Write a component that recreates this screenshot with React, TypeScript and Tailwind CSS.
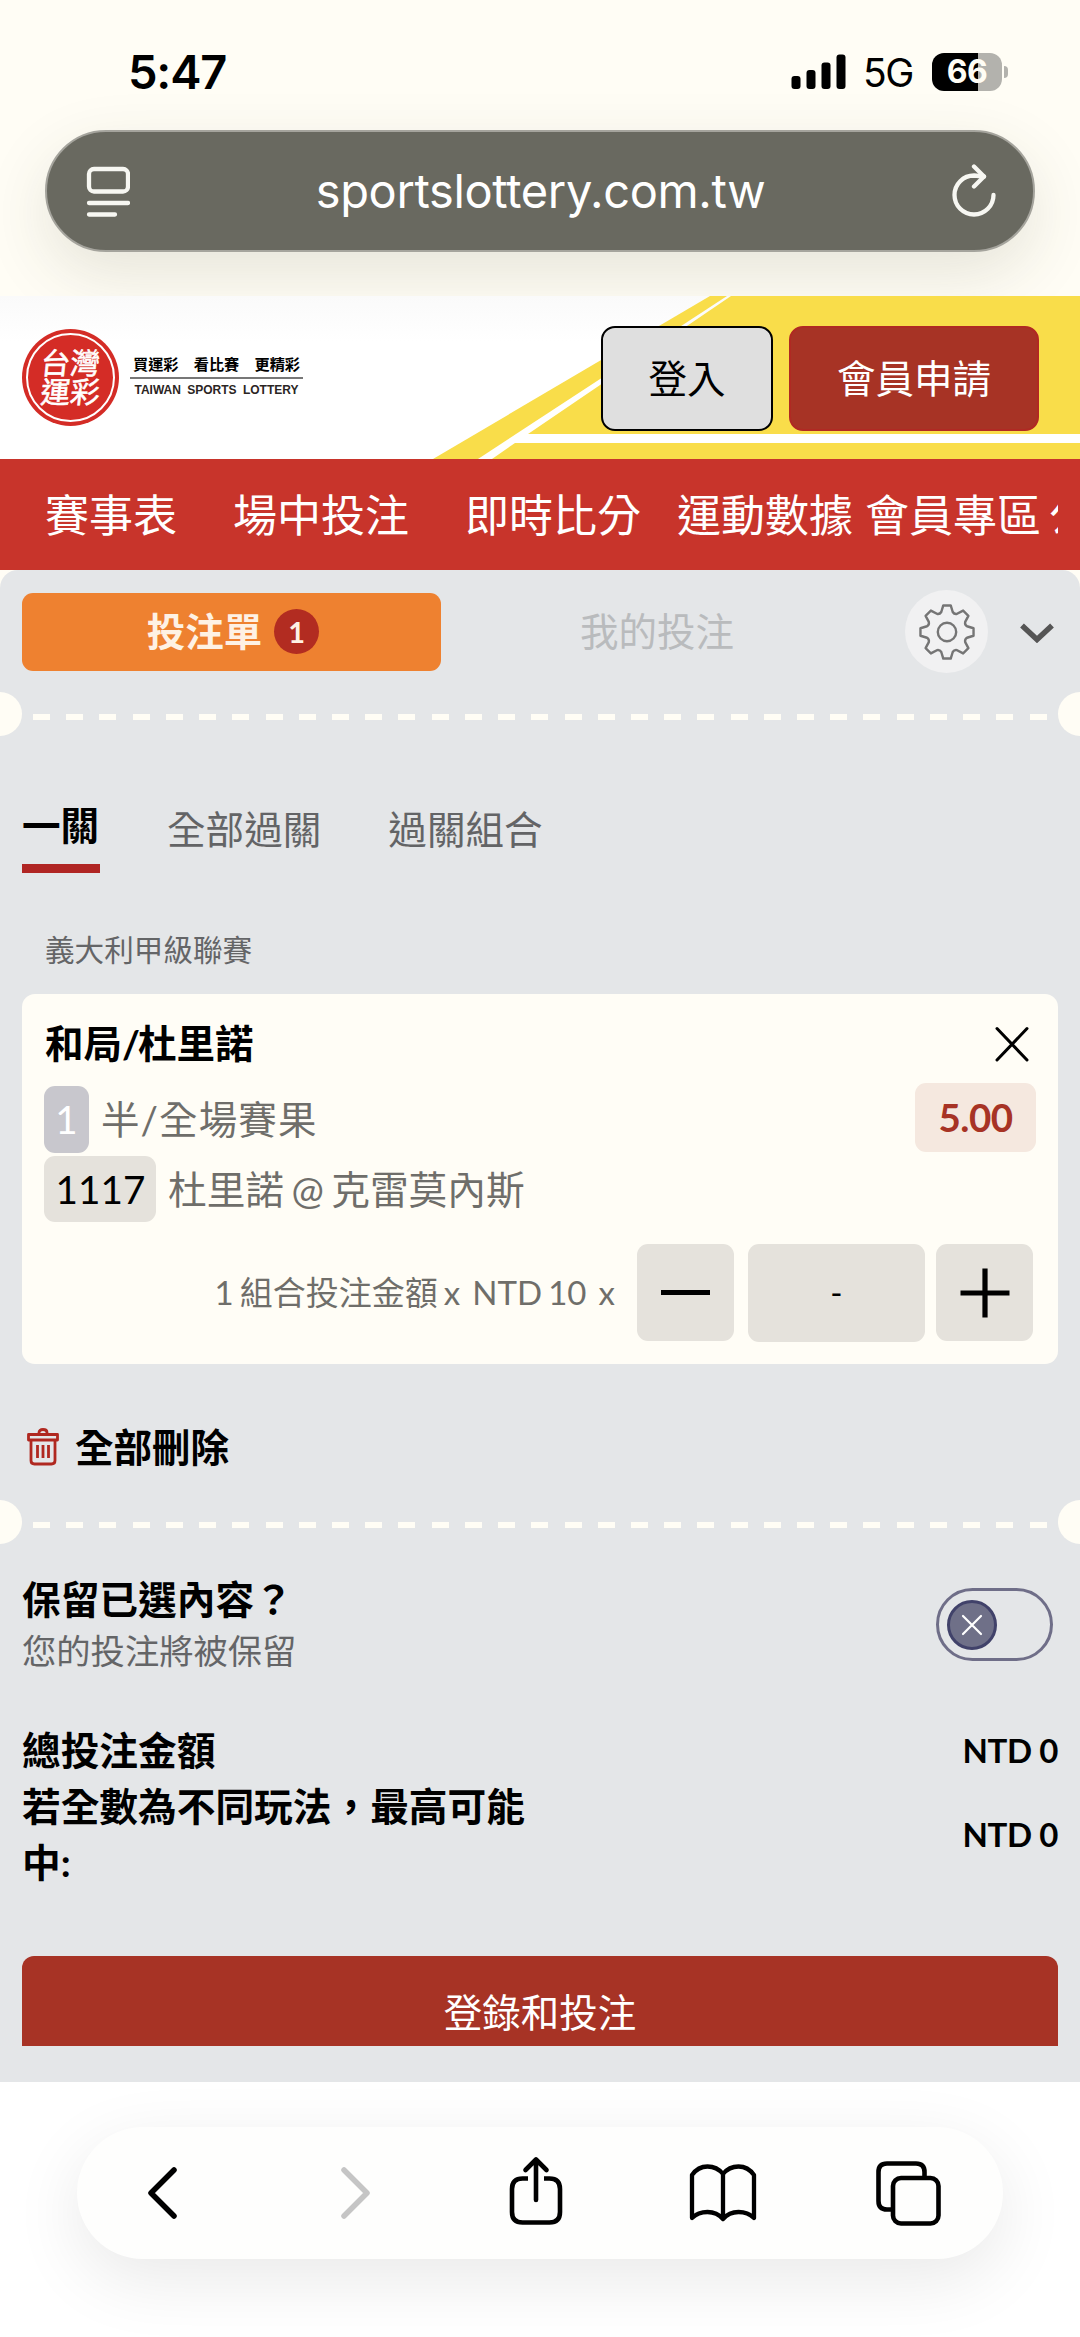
import React from "react";

const latin = "font-[Inter,'Noto_Sans_CJK_TC',sans-serif]";

function StatusBar() {
  return (
    <div className={`flex h-[130px] items-start justify-between pt-[44px] pr-[72px] pl-[128px] ${latin}`}>
      <span className="h-[56px] text-[47px] leading-[56px] font-semibold tracking-[-1.2px] text-black">5:47</span>
      <div className="flex h-[56px] items-center">
        <svg width="56" height="38" viewBox="0 0 56 38" className="mr-[16px]">
          <rect x="0.5" y="23" width="9" height="13" rx="3" />
          <rect x="15.5" y="17" width="9" height="19" rx="3" />
          <rect x="30.5" y="9.500" width="9" height="26.500" rx="3" />
          <rect x="45.500" y="1.500" width="9" height="34.500" rx="3" />
        </svg>
        <span className="mt-[2px] w-[52px] text-[39px] leading-[56px] tracking-[-1.5px] text-black">5G</span>
        <div className="ml-[17px] flex items-center gap-[2px]">
          <div className="flex h-[38px] w-[70px] items-center justify-center overflow-hidden rounded-[12px] bg-[linear-gradient(90deg,#000_66%,#b3b2ad_66%)] text-[32px] leading-[38px] font-bold tracking-[-0.5px] text-[#fffdf5]">
            66
          </div>
          <div className="h-[12px] w-[4px] rounded-r-full bg-[#b3b2ad]" />
        </div>
      </div>
    </div>
  );
}

function AddressBar() {
  return (
    <div className="mx-[45px] flex h-[122px] items-center justify-between rounded-full border-2 border-[#a5a49d] bg-[#696960] pr-[36px] pl-[39px] shadow-[0_22px_64px_rgba(60,60,40,0.13)]">
      <svg width="44" height="54" viewBox="0 0 44 54" fill="none" stroke="#f7f7f2" strokeWidth="4.300" strokeLinecap="round">
        <rect x="3" y="5" width="39" height="22.500" rx="5" />
        <path d="M3 39H42M3 50.500H29" />
      </svg>
      <span className={`text-[47px] leading-[60px] tracking-[-0.35px] whitespace-nowrap text-white ${latin}`}>sportslottery.com.tw</span>
      <svg width="46" height="54" viewBox="0 0 46 54" fill="none" stroke="#f7f7f2" strokeWidth="4.300" strokeLinecap="round" strokeLinejoin="round">
        <path d="M42.500 31A19.500 19.500 0 1 1 23 11.500L33 12.500" />
        <path d="M23 2.500L33 12.500L23 22.500" />
      </svg>
    </div>
  );
}

function SiteHeader() {
  return (
    <header className="relative h-[163px] bg-white bg-[linear-gradient(180deg,#fafafa,#fff_28%)]">
      <svg className="absolute inset-0" width="1080" height="163" viewBox="0 0 1080 163" fill="#f9dd4a">
        <path d="M433 163L710 0H727L478 163Z" />
        <path d="M528 138L731 0H1080V138Z" />
        <path d="M492 163L515 147H1080V163Z" />
      </svg>
      <div className="relative flex h-full items-start pt-[30px] pl-[22px]">
        <div className="mt-[3px] flex size-[97px] items-center justify-center rounded-full bg-[#d42c26] p-[4px]">
          <div className="flex size-full flex-col items-center justify-center rounded-full border-2 border-white pb-[2px] text-[29.500px] leading-[29px] font-normal text-white [-webkit-text-stroke:0.6px_white]">
            <span className="-skew-x-6">台灣</span>
            <span className="-skew-x-6">運彩</span>
          </div>
        </div>
        <div className="mt-[28px] ml-[11px] flex w-[173px] flex-col items-center">
          <span className="h-[23px] text-[15.2px] leading-[21px] font-bold whitespace-pre text-black">買運彩　看比賽　更精彩</span>
          <span className="h-[2px] w-full bg-[#777]" />
          <span className="mt-[3px] h-[16px] font-['Liberation_Sans',sans-serif] text-[12px] leading-[16px] font-bold whitespace-nowrap text-[#2b2523] [word-spacing:3px]">
            TAIWAN SPORTS LOTTERY
          </span>
        </div>
        <button className="ml-[298px] h-[105px] w-[172px] rounded-[14px] border-[2.500px] border-black bg-[#dfdfdf] text-[38.5px] text-black">登入</button>
        <button className="ml-[16px] h-[105px] w-[250px] rounded-[14px] border-[2.500px] border-[#b02923] bg-[#a73325] text-[38.5px] text-white">會員申請</button>
      </div>
    </header>
  );
}

function MainNav() {
  return (
    <nav className="h-[111px] bg-[#c8342b] pr-[22px] pl-[45px]">
      <div className="flex h-full items-center overflow-hidden text-[44px] whitespace-nowrap text-white">
        <span className="mr-[56px]">賽事表</span>
        <span className="mr-[56px]">場中投注</span>
        <span className="mr-[36px]">即時比分</span>
        <span className="mr-[12px]">運動數據</span>
        <span className="mr-[8px]">會員專區</span>
        <span>公益</span>
      </div>
    </nav>
  );
}

function Perforation() {
  return (
    <div className="flex h-[44px] items-center justify-between">
      <div className="h-[44px] w-[22px] rounded-r-full bg-[#fffdf5]" />
      <div className="mt-[6px] flex w-[1014px] justify-between">
        {Array.from({ length: 31 }, (_, i) => (
          <span key={i} className="h-[6px] w-[17px] bg-[#fffdf5]" />
        ))}
      </div>
      <div className="h-[44px] w-[22px] rounded-l-full bg-[#fffdf5]" />
    </div>
  );
}

function gearPath() {
  const teeth = 8;
  const pts: string[] = [];
  const at = (r: number, deg: number) => {
    const a = ((deg - 90) * Math.PI) / 180;
    return `${(28 + r * Math.cos(a)).toFixed(2)} ${(28 + r * Math.sin(a)).toFixed(2)}`;
  };
  for (let i = 0; i < teeth; i++) {
    const c = (i * 360) / teeth;
    pts.push(`${i === 0 ? "M" : "L"}${at(20.8, c - 16)}`, `L${at(26.8, c - 8)}`, `L${at(26.8, c + 8)}`, `L${at(20.8, c + 16)}`);
    pts.push(`Q${at(19, c + 22.5)} ${at(20.8, c + 29)}`);
  }
  return pts.join("") + "Z";
}

function SlipTabs() {
  return (
    <div className="flex h-[83px] items-center pl-[22px] text-[38.5px]">
      <div className="flex h-[78px] w-[419px] items-center justify-center gap-[12px] rounded-[11px] bg-[#ee8130] pl-[3px] font-bold text-[#fef1e4]">
        <span>投注單</span>
        <span className="flex size-[45px] items-center justify-center rounded-full bg-[#b22c21] text-[29px]">1</span>
      </div>
      <span className="ml-[139px] w-[156px] text-[#b9bbbd]">我的投注</span>
      <div className="ml-[169px] flex size-[83px] items-center justify-center rounded-full bg-[#f1f1f2]">
        <svg width="56" height="56" viewBox="0 0 56 56" fill="none" stroke="#757575" strokeWidth="2.400" strokeLinejoin="round" className="ml-[1px]">
          <path d={gearPath()} />
          <circle cx="28" cy="28" r="9.200" />
        </svg>
      </div>
      <svg width="34" height="20" viewBox="0 0 34 20" fill="none" stroke="#555" strokeWidth="5.500" className="mt-[2px] ml-[32px]">
        <path d="M2 2.500L17 16.500L32 2.500" />
      </svg>
    </div>
  );
}

function ParlayTabs() {
  return (
    <div className="mt-[69px] flex h-[68px] items-start pl-[22px] text-[38.600px] text-[#636466]">
      <div className="flex w-[78px] flex-col">
        <span className="h-[40px] leading-[40px] font-bold text-black">一關</span>
        <span className="mt-[19px] h-[9px] bg-[#b02523]" />
      </div>
      <span className="ml-[67px] h-[49px] leading-[49px]">全部過關</span>
      <span className="ml-[67px] h-[49px] leading-[49px]">過關組合</span>
    </div>
  );
}

function BetCard() {
  return (
    <section className="mx-[22px] h-[370px] rounded-[13px] bg-[#fffdf6] pt-[17px] pl-[22px]">
      <div className="flex h-[66px] items-center justify-between pr-[28px]">
        <h3 className="pl-[1px] text-[38.500px] font-bold text-black">
          和局<span className="tracking-[-2px]">/</span>杜里諾
        </h3>
        <svg width="36" height="36" viewBox="0 0 36 36" fill="none" stroke="#000" strokeWidth="3" strokeLinecap="round">
          <path d="M3 2.500L33 34M33 2.500L3 34" />
        </svg>
      </div>
      <div className="mt-[9px] flex h-[67px] items-center justify-between pr-[22px] text-[38.500px] text-[#6f6e6a]">
        <div className="flex items-center">
          <span className="flex h-[67px] w-[45px] items-center justify-center rounded-[11px] bg-[#c8c7cd] text-white">1</span>
          <span className="ml-[12px] tracking-[1.1px]">半/全場賽果</span>
        </div>
        <span className="-mt-[4px] flex h-[69px] w-[121px] items-center justify-center rounded-[11px] bg-[#f5e8df] font-bold tracking-[-0.5px] text-[#a73325]">5.00</span>
      </div>
      <div className="mt-[3px] flex h-[66px] items-center text-[38.700px] text-[#6f6e6a]">
        <span className="flex h-[66px] w-[112px] items-center justify-center rounded-[11px] bg-[#e5e2dc] pl-[1px] text-black">1117</span>
        <span className="ml-[12px] whitespace-nowrap [word-spacing:-2.500px]">杜里諾 @ 克雷莫內斯</span>
      </div>
      <div className="mt-[22px] flex h-[98px] items-start">
        <span className="flex h-[97px] w-[593px] items-center justify-end pr-[22px] text-[33px] whitespace-pre text-[#6f6e6a] [word-spacing:-2.400px]">1 組合投注金額 x  NTD 10  x</span>
        <button className="flex h-[97px] w-[97px] items-center justify-center rounded-[11px] bg-[#e5e2dc]">
          <span className="h-[5px] w-[49px] bg-black" />
        </button>
        <span className="ml-[14px] flex h-[98px] w-[177px] items-center justify-center rounded-[11px] bg-[#e5e2dc] text-[33px] text-black">-</span>
        <button className="ml-[11px] flex h-[97px] w-[97px] items-center justify-center rounded-[11px] bg-[#e5e2dc]">
          <svg width="50" height="50" viewBox="0 0 50 50" stroke="#000" strokeWidth="5.200">
            <path d="M0.500 25H49.500M25 0.500V49.500" />
          </svg>
        </button>
      </div>
    </section>
  );
}

function ClearAll() {
  return (
    <div className="mt-[63px] flex h-[41px] items-start pl-[26px]">
      <svg width="34" height="40" viewBox="0 0 34 40" fill="none" stroke="#b02820" strokeWidth="2.800" strokeLinejoin="round">
        <path d="M2.500 7.500H31.500V13H2.500Z" />
        <path d="M5 13V33.500Q5 37 8.500 37H25.500Q29 37 29 33.500V13" />
        <path d="M13 7V5.500Q13 2.500 17 2.500Q21 2.500 21 5.500V7" />
        <path d="M11.500 18V31M17 18V31M22.500 18V31" />
      </svg>
      <span className="ml-[15px] text-[38.500px] leading-[40px] font-bold text-black">全部刪除</span>
    </div>
  );
}

function KeepSelection() {
  return (
    <div className="mt-[29px] flex h-[102px] items-start justify-between pr-[27px] pl-[22px]">
      <div>
        <p className="h-[52px] text-[38.700px] leading-[52px] font-bold text-black">保留已選內容？</p>
        <p className="h-[50px] text-[34.300px] leading-[51px] text-[#646567]">您的投注將被保留</p>
      </div>
      <div className="mt-[15px] flex h-[73px] w-[117px] items-center rounded-full border-[3px] border-[#6f6e88] pl-[8px]">
        <div className="flex size-[50px] items-center justify-center rounded-full border-[3px] border-[#41426a] bg-[#6f7088]">
          <svg width="22" height="22" viewBox="0 0 22 22" stroke="#fff" strokeWidth="2.200" strokeLinecap="round">
            <path d="M2 2L20 20M20 2L2 20" />
          </svg>
        </div>
      </div>
    </div>
  );
}

function Totals() {
  return (
    <div className="mt-[47px] pr-[22px] pl-[22px] text-[38.700px] leading-[56px] font-bold text-black">
      <div className="flex h-[56px] items-center justify-between">
        <span>總投注金額</span>
        <span className="text-[33px] tracking-[-0.4px]">NTD 0</span>
      </div>
      <div className="flex h-[112px] items-center justify-between">
        <span className="w-[518px]">若全數為不同玩法，最高可能中:</span>
        <span className="text-[33px] tracking-[-0.4px]">NTD 0</span>
      </div>
    </div>
  );
}

function BrowserToolbar() {
  return (
    <footer className="relative h-[255px] bg-white pt-[45px]">
      <div className="mx-[77px] flex h-[132px] items-center rounded-full bg-[#fefefd] pl-[69px] shadow-[0_20px_70px_rgba(0,0,0,0.09)]">
        <svg width="36" height="54" viewBox="0 0 36 54" fill="none" stroke="#000" strokeWidth="5.500" strokeLinecap="round" strokeLinejoin="round">
          <path d="M28 4L5 27L28 50" />
        </svg>
        <svg width="36" height="54" viewBox="0 0 36 54" fill="none" stroke="#c5c5c5" strokeWidth="5.500" strokeLinecap="round" strokeLinejoin="round" className="ml-[156px]">
          <path d="M6 4L29 27L6 50" />
        </svg>
        <svg width="56" height="70" viewBox="0 0 56 70" fill="none" stroke="#000" strokeWidth="4.600" strokeLinecap="round" strokeLinejoin="round" className="-mt-[4px] ml-[134px]">
          <path d="M28 44V4M17.500 14L28 3.500L38.500 14" />
          <path d="M20 22.500H14.500Q4 22.500 4 33V56Q4 66.500 14.500 66.500H41.500Q52 66.500 52 56V33Q52 22.500 41.500 22.500H36" strokeLinecap="butt" />
        </svg>
        <svg width="70" height="60" viewBox="0 0 70 60" fill="none" stroke="#000" strokeWidth="4.300" strokeLinecap="round" strokeLinejoin="round" className="ml-[124px]">
          <path d="M35 11Q29 3.500 19.500 3.500Q10 3.500 4 12V55Q10 49 19.500 49Q29 49 35 56Q41 49 50.500 49Q60 49 66 55V12Q60 3.500 50.500 3.500Q41 3.500 35 11V56" />
        </svg>
        <svg width="66" height="66" viewBox="0 0 66 66" fill="none" stroke="#000" strokeWidth="4.600" className="ml-[117px]">
          <path d="M17 49.500H12Q3.500 49.500 3.500 41V12Q3.500 3.500 12 3.500H41Q49.500 3.500 49.500 12V18" />
          <rect x="18" y="18" width="45.500" height="45.500" rx="8" />
        </svg>
      </div>
    </footer>
  );
}

export default function App() {
  return (
    <div className="flex h-[2337px] w-[1080px] flex-col overflow-hidden bg-white font-[Lato,'Noto_Sans_CJK_TC',sans-serif]">
      <div className="h-[296px] shrink-0 overflow-hidden bg-[#fffdf5]">
        <StatusBar />
        <AddressBar />
      </div>
      <SiteHeader />
      <MainNav />
      <div className="bg-[#fffdf5]">
        <main className="h-[1512px] rounded-t-[18px] bg-[#e4e6e8] pt-[20px]">
          <SlipTabs />
          <div className="mt-[19px]">
            <Perforation />
          </div>
          <ParlayTabs />
          <p className="mt-[57px] mb-[24px] h-[40px] pl-[45px] text-[29.600px] leading-[40px] text-[#646567]">義大利甲級聯賽</p>
          <BetCard />
          <ClearAll />
          <div className="mt-[32px]">
            <Perforation />
          </div>
          <KeepSelection />
          <Totals />
          <div className="mx-[22px] mt-[66px] h-[90px] overflow-hidden rounded-t-[12px] bg-[#a73325] text-center text-[38.500px] leading-[112px] text-white">
            登錄和投注
          </div>
        </main>
      </div>
      <BrowserToolbar />
    </div>
  );
}
